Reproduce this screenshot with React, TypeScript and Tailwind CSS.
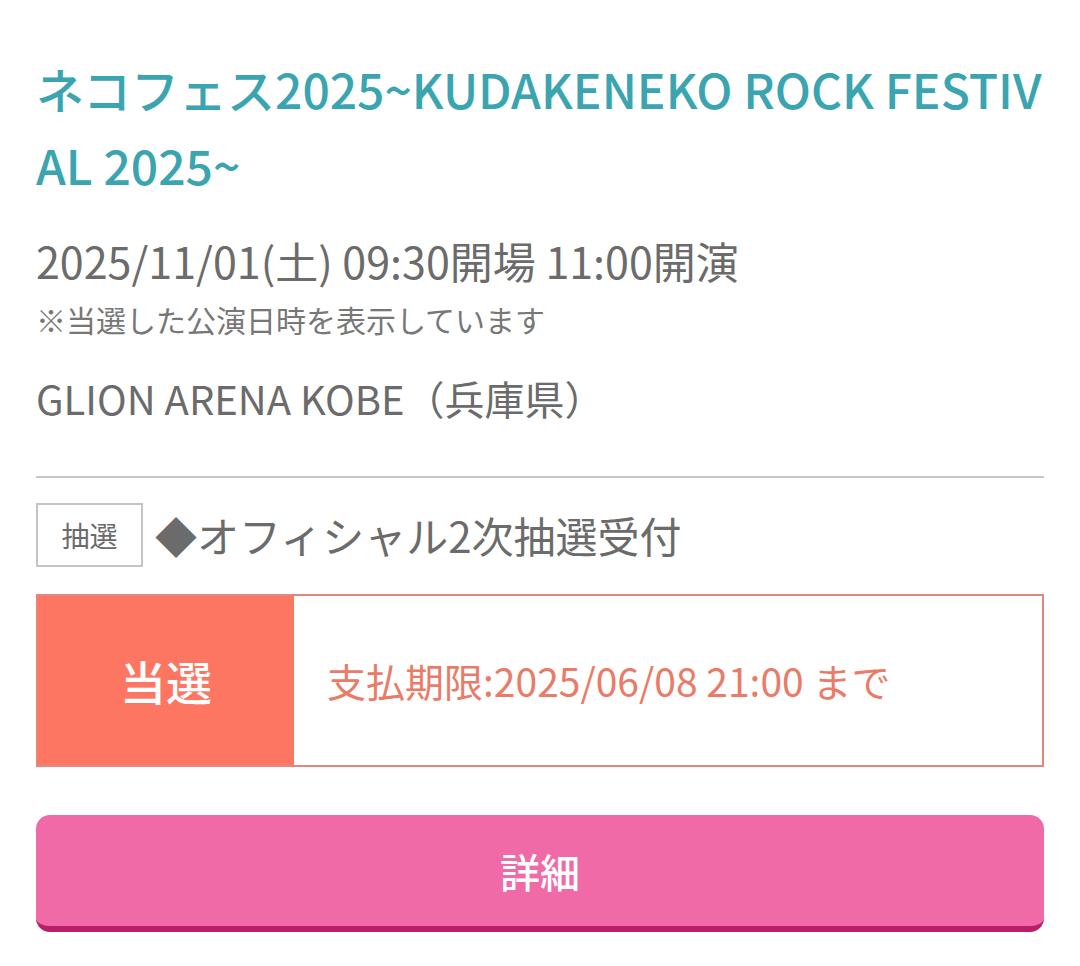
const font = { fontFamily: '"Noto Sans CJK JP", "Noto Sans", sans-serif' };

export default function App() {
  return (
    <div className="w-[1080px] min-h-[966px] bg-white px-9 pt-[50px]" style={font}>
      <h1 className="text-[48px] leading-[76px] font-medium text-[#3aa5b0] break-all">
        ネコフェス2025~KUDAKENEKO ROCK FESTIVAL 2025~
      </h1>

      <p className="mt-[30px] text-[43px] leading-[56px] text-[#6b6b6b]">
        2025/11/01(土) 09:30開場 11:00開演
      </p>
      <p className="mt-[11px] text-[30px] leading-[40px] text-[#777]">※当選した公演日時を表示しています</p>

      <p className="mt-[31px] text-[40px] leading-[56px] text-[#6b6b6b]">GLION ARENA KOBE（兵庫県）</p>

      <div className="mt-[50px] h-[2px] bg-[#c8c8c8]" />

      <div className="mt-[25px] flex items-center gap-[12px]">
        <span className="flex h-[64px] w-[107px] items-center justify-center border-2 border-[#c4c4c4] text-[28px] text-[#6b6b6b]">
          抽選
        </span>
        <span className="text-[42px] leading-[56px] text-[#6b6b6b]">◆オフィシャル2次抽選受付</span>
      </div>

      <div className="mt-[27px] flex h-[173px] border-2 border-[#e3877b]">
        <div className="flex w-[256px] items-center justify-center bg-[#fd7662] text-[46px] font-medium text-white">
          当選
        </div>
        <div className="flex flex-1 items-center pl-[33px] text-[39px] text-[#ea7b67]">
          支払期限:2025/06/08 21:00 まで
        </div>
      </div>

      <button className="mt-[48px] flex h-[117px] w-full items-center justify-center rounded-[14px] border-b-[6px] border-[#ba1d69] bg-[#f06aa8] text-[40px] font-medium text-white">
        詳細
      </button>
    </div>
  );
}
